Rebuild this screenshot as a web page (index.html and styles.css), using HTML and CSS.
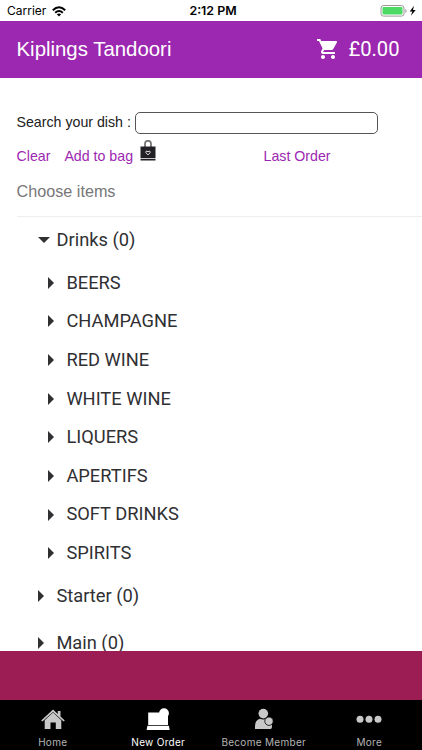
FILE: index.html
```html
<!DOCTYPE html>
<html lang="en">
<head>
<meta charset="utf-8">
<title>Kiplings Tandoori</title>
<link rel="stylesheet" href="styles.css">
</head>
<body>
<div class="status">
  <div class="carrier"><span>Carrier</span>
    <svg width="14" height="11" viewBox="0 0 14 11" fill="none" stroke="#000" stroke-width="2"><path d="M.8 4.2Q7-1.6 13.2 4.2M3.2 6.7Q7 3.2 10.8 6.7"/><path d="M7 10.5L4.8 8.2Q7 6.6 9.2 8.2Z" fill="#000" stroke="none"/></svg>
  </div>
  <div class="time">2:12 PM</div>
  <svg class="battery" width="38" height="12" viewBox="0 0 38 12"><rect x="1" y=".5" width="23" height="10.6" rx="2.5" fill="#fff" stroke="#999"/><rect x="2.500" y="2" width="20" height="7.6" rx="1" fill="#4cd964"/><path d="M25.300 4v4q1.300-.5 1.300-2T25.300 4Z" fill="#999"/><path d="M34 .7L29.700 6.500h2.600l-1.400 4.300L35.700 4.900h-2.700Z" fill="#000"/></svg>
</div>
<header class="bar">
  <h1>Kiplings Tandoori</h1>
  <div class="cart">
    <svg width="24" height="24" viewBox="0 0 24 24" fill="#fff"><path d="M7 18c-1.100 0-1.990.9-1.990 2S5.900 22 7 22s2-.9 2-2-.9-2-2-2zM1 2v2h2l3.600 7.590-1.350 2.450c-.16.280-.25.610-.25.960 0 1.100.9 2 2 2h12v-2H7.420c-.14 0-.25-.11-.25-.25l.03-.12.900-1.630h7.450c.75 0 1.410-.41 1.750-1.030l3.580-6.490A1 1 0 0 0 20 4H5.210l-.94-2H1zm16 16c-1.100 0-1.990.9-1.990 2s.89 2 1.990 2 2-.9 2-2-.9-2-2-2z"/></svg>
    <span>£0.00</span>
  </div>
</header>
<main>
  <div class="search"><label for="dish">Search your dish :</label><input id="dish" type="text"></div>
  <div class="actions">
    <a class="clear">Clear</a><a class="add">Add to bag</a>
    <svg class="bag" width="16" height="21" viewBox="0 0 16 21"><path d="M5 7V4Q5 .8 8 .8T11 4v3" fill="none" stroke="#777" stroke-width="1.800"/><path d="M.5 6.500h15v11.500H.5ZM.5 18.800h15v1.700H.5Z" fill="#222024"/><path d="M8 14.800L5.800 12.700Q5.600 10.800 7 11L8 12l1-1q1.400-.2 1.200 1.700Z" fill="none" stroke="#ddd"/></svg>
    <a class="last">Last Order</a>
  </div>
  <div class="choose">Choose items</div>
  <ul class="menu">
    <li class="group"><i class="down"></i>Drinks (0)</li>
    <li class="item"><i></i>BEERS</li>
    <li class="item"><i></i>CHAMPAGNE</li>
    <li class="item"><i></i>RED WINE</li>
    <li class="item"><i></i>WHITE WINE</li>
    <li class="item"><i></i>LIQUERS</li>
    <li class="item"><i></i>APERTIFS</li>
    <li class="item"><i></i>SOFT DRINKS</li>
    <li class="item"><i></i>SPIRITS</li>
    <li class="group"><i></i>Starter (0)</li>
    <li class="group last-row"><i></i>Main (0)</li>
  </ul>
</main>
<div class="strip"></div>
<nav class="tabs">
  <div class="tab"><svg width="26" height="24" viewBox="0 0 26 24" fill="#c8c8c8"><path d="M1.200 12.500L13 1.500l4.800 4.400V3h2.700v5.400l4.300 4.100-1.200 1.100L13 3.900 2.400 13.600Z"/><path d="M13 4.600l8.300 7.600V21h-5.500v-6.500h-5.300V21H4.700v-8.800Z"/></svg><span>Home</span></div>
  <div class="tab active"><svg width="26" height="24" viewBox="0 0 26 24" fill="#fff"><path d="M3.200 4.500h13.500V17H3.200Z"/><circle cx="19" cy="5.200" r="4.900"/><path d="M16 5h7v12h-7ZM2.400 17.700h21.500l.8 4.300H1.600Z"/></svg><span>New Order</span></div>
  <div class="tab"><svg width="26" height="24" viewBox="0 0 26 24" fill="#c8c8c8"><circle cx="12.300" cy="5.600" r="4.800"/><path d="M4 21v-3q0-6 5-7.200 3.300 1.600 6.500 0 5.500 1 5.500 7.200 0 3-1.500 3Z"/><circle cx="18" cy="13.200" r="4.200" stroke="#000" stroke-width=".8"/></svg><span>Become Member</span></div>
  <div class="tab"><svg width="26" height="24" viewBox="0 0 26 24" fill="#c8c8c8"><circle cx="4" cy="11.300" r="3.500"/><circle cx="13" cy="11.300" r="3.500"/><circle cx="22" cy="11.300" r="3.500"/></svg><span>More</span></div>
</nav>
</body>
</html>
```
FILE: styles.css
```css
* { box-sizing: border-box; }
body {
  margin: 0;
  width: 422px;
  height: 750px;
  overflow: hidden;
  display: flex;
  flex-direction: column;
  background: #fff;
  font-family: "Liberation Sans", sans-serif;
}
.status {
  flex: none;
  height: 21px;
  display: grid;
  grid-template-columns: 1fr auto 1fr;
  align-items: center;
  padding: 1px 4px 0 7px;
  font: 12px/20px Inter, sans-serif;
  color: #000;
}
.carrier { display: flex; align-items: center; gap: 6px; }
.time { font-weight: 600; font-size: 12.4px; padding-left: 1px; }
.battery { justify-self: end; }
.bar {
  flex: none;
  height: 56.600px;
  display: flex;
  align-items: center;
  justify-content: space-between;
  padding: 0 22.500px 0 16.500px;
  background: #9c27b0;
  color: #fff;
}
h1 { margin: 0; font-size: 20.4px; font-weight: 400; }
.cart { display: flex; align-items: center; gap: 8px; font: 20.2px/24px Roboto, sans-serif; }
main { flex: 1; min-height: 0; overflow: hidden; padding-top: 34.400px; }
.search { height: 22px; display: flex; align-items: center; padding-left: 16.500px; font-size: 14.2px; color: #212121; }
.search label { margin-top: -2px; }
.search input {
  width: 243px;
  height: 22px;
  margin: 0 0 0 4px;
  padding: 0 4px;
  border: 1px solid #555;
  border-radius: 5px;
  background: #fff;
}
.actions { height: 44px; display: flex; align-items: center; padding-left: 16.500px; font-size: 14.2px; color: #9c27b0; }
.add { margin-left: 14px; }
.bag { margin: -10px 0 0 6.500px; }
.last { margin-left: 108px; }
.choose {
  height: 38.600px;
  margin-left: 16.500px;
  padding-top: 3px;
  border-bottom: 1px solid #eee;
  color: #777;
  font-size: 16.200px;
  line-height: 20px;
}
.menu { margin: 0; padding: 0; list-style: none; font: 18.3px/1 Roboto, sans-serif; color: #303033; }
.menu li { display: flex; align-items: center; }
.group { height: 46.800px; padding-left: 38px; }
.last-row { padding-top: 1px; }
.item { height: 38.670px; padding-left: 48px; }
.menu i {
  margin-right: 12.400px;
  border-style: solid;
  border-width: 6.300px 0 6.300px 6.500px;
  border-color: transparent transparent transparent #303033;
}
.menu i.down { margin-right: 6.500px; border-width: 6.200px 6px 0; border-color: #303033 transparent transparent; }
.strip { flex: none; height: 49px; background: #9c1c54; }
.tabs { flex: none; height: 50px; display: grid; grid-template-columns: repeat(4, 1fr); background: #000; color: #b4b4b4; }
.tab { display: flex; flex-direction: column; align-items: center; padding-top: 8px; font: 10px/12px Inter, sans-serif; }
.tab span { margin-top: 4px; letter-spacing: .3px; }
.active { color: #fff; }
```
